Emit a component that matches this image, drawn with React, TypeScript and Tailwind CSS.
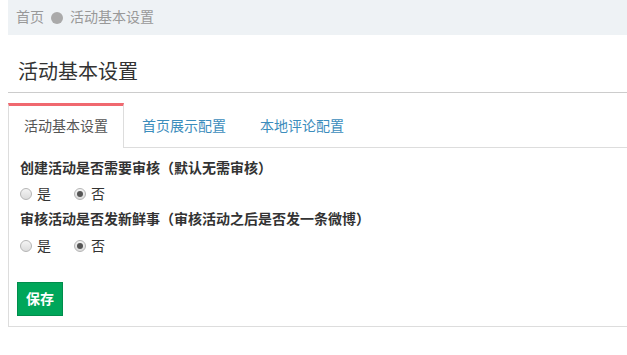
import React from "react";

const font = { fontFamily: '"Liberation Sans", "Noto Sans CJK SC", sans-serif' };

const tabs = ["活动基本设置", "首页展示配置", "本地评论配置"];

const Radio = ({ checked, label }: { checked?: boolean; label: string }) => (
  <label className="flex items-center gap-[5px]">
    <span className="flex h-[12px] w-[12px] items-center justify-center rounded-full border border-[#b5b5b5] bg-gradient-to-b from-[#f4f4f4] to-[#dcdcdc]">
      {checked && <span className="h-[6px] w-[6px] rounded-full bg-[#555]" />}
    </span>
    <span className="text-[14px] text-[#333]">{label}</span>
  </label>
);

const Question = ({ title, gap }: { title: string; gap: string }) => (
  <>
    <div className="pl-[3px] text-[14px] font-bold leading-[20px] text-[#333]">{title}</div>
    <div className={`flex gap-[23px] pl-[3px] leading-[20px] ${gap}`}>
      <Radio label="是" />
      <Radio label="否" checked />
    </div>
  </>
);

export default function App() {
  return (
    <div className="h-[355px] w-[627px] overflow-hidden bg-white pl-2" style={font}>
      <div className="flex h-[35px] items-center gap-[7px] bg-[#eef2f5] pl-2 text-[14px] text-[#999]">
        <span>首页</span>
        <span className="h-[12px] w-[12px] rounded-full bg-[#aaa]" />
        <span>活动基本设置</span>
      </div>

      <div className="flex h-[58px] items-end border-b border-[#ccc] pb-[8px] pl-[10px]">
        <h1 className="text-[20px] leading-[24px] text-[#333]">活动基本设置</h1>
      </div>

      <div className="mt-[10px] flex border-b border-[#ddd]">
        {tabs.map((t, i) =>
          i === 0 ? (
            <div
              key={t}
              className="-mb-px mr-[2px] border-x border-t-[3px] border-x-[#ddd] border-t-[#f0686f] bg-white px-[15px] text-[14px] leading-[41px] text-[#555]"
            >
              {t}
            </div>
          ) : (
            <div
              key={t}
              className="mr-[2px] border-x border-t-[3px] border-transparent px-[15px] text-[14px] leading-[41px] text-[#3c8dbc]"
            >
              {t}
            </div>
          )
        )}
      </div>

      <div className="flex flex-col border-b border-l border-[#ddd] px-[8px] pb-[10px] pt-[10px]">
        <Question title="创建活动是否需要审核（默认无需审核）" gap="mt-[6px]" />
        <div className="h-[5px]" />
        <Question title="审核活动是否发新鲜事（审核活动之后是否发一条微博）" gap="mt-[7px]" />
        <div className="mt-[26px]">
          <button className="h-[34px] border border-[#008d4c] bg-[#00a65a] px-[8px] text-[14px] font-bold text-white">
            保存
          </button>
        </div>
      </div>
    </div>
  );
}
